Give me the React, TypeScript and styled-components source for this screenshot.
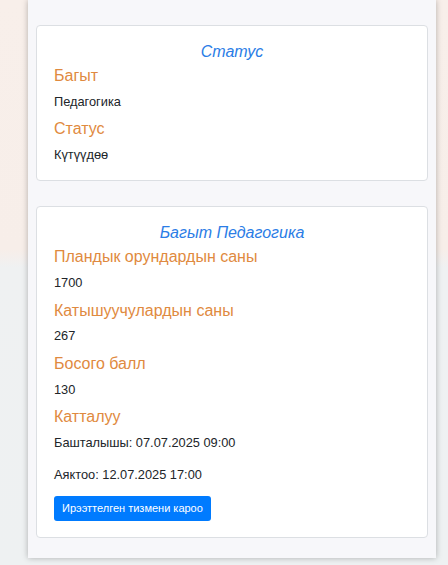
import React from "react";
import styled, { createGlobalStyle } from "styled-components";

const Global = createGlobalStyle`
  html, body { margin: 0; padding: 0; }
  body {
    font-family: "Liberation Sans", Arial, sans-serif;
    color: #212529;
    background: linear-gradient(180deg, #f8efea 0px, #f7eee9 250px, #eff1f2 268px, #eef1f2 100%);
    min-height: 565px;
  }
`;

const Page = styled.div`
  padding: 0 12px 8px 28px;
  width: 408px;
`;

const Panel = styled.div`
  background: #f7f7fa;
  box-shadow: 0 0 6px rgba(0, 0, 0, 0.28);
  padding: 25px 8px 20px;
  display: flex;
  flex-direction: column;
  gap: 25.5px;
`;

const Card = styled.section`
  background: #fff;
  border: 1px solid #dcdfe3;
  border-radius: 4px;
  padding: 16px 17px 16px;
  display: flex;
  flex-direction: column;
`;

const Title = styled.h5`
  margin: 0 0 5px;
  font-size: 16px;
  line-height: 19px;
  font-style: italic;
  font-weight: 400;
  color: #2b7de6;
  text-align: center;
`;

const Label = styled.h6`
  margin: 0 0 6.8px;
  font-size: 16px;
  line-height: 19px;
  font-weight: 400;
  color: #df8a40;
`;

const Value = styled.p<{ $gap?: number }>`
  margin: 0 0 ${(p) => p.$gap ?? 8.4}px;
  font-size: 12.8px;
  line-height: 19px;
  &:last-child { margin-bottom: 0; }
`;

const Button = styled.button`
  align-self: flex-start;
  margin-top: 4px;
  background: #007bff;
  color: #fff;
  border: none;
  border-radius: 3px;
  font-family: "Liberation Sans", Arial, sans-serif;
  font-size: 11px;
  line-height: 15px;
  padding: 5px 8px;
  cursor: pointer;
`;

export default function App() {
  return (
    <>
      <Global />
      <Page>
        <Panel>
          <Card>
            <Title>Статус</Title>
            <Label>Багыт</Label>
            <Value>Педагогика</Value>
            <Label>Статус</Label>
            <Value>Күтүүдөө</Value>
          </Card>
          <Card>
            <Title>Багыт Педагогика</Title>
            <Label>Пландык орундардын саны</Label>
            <Value>1700</Value>
            <Label>Катышуучулардын саны</Label>
            <Value>267</Value>
            <Label>Босого балл</Label>
            <Value>130</Value>
            <Label>Катталуу</Label>
            <Value $gap={13}>Башталышы: 07.07.2025 09:00</Value>
            <Value>Аяктоо: 12.07.2025 17:00</Value>
            <Button>Ирээттелген тизмени карoo</Button>
          </Card>
        </Panel>
      </Page>
    </>
  );
}
